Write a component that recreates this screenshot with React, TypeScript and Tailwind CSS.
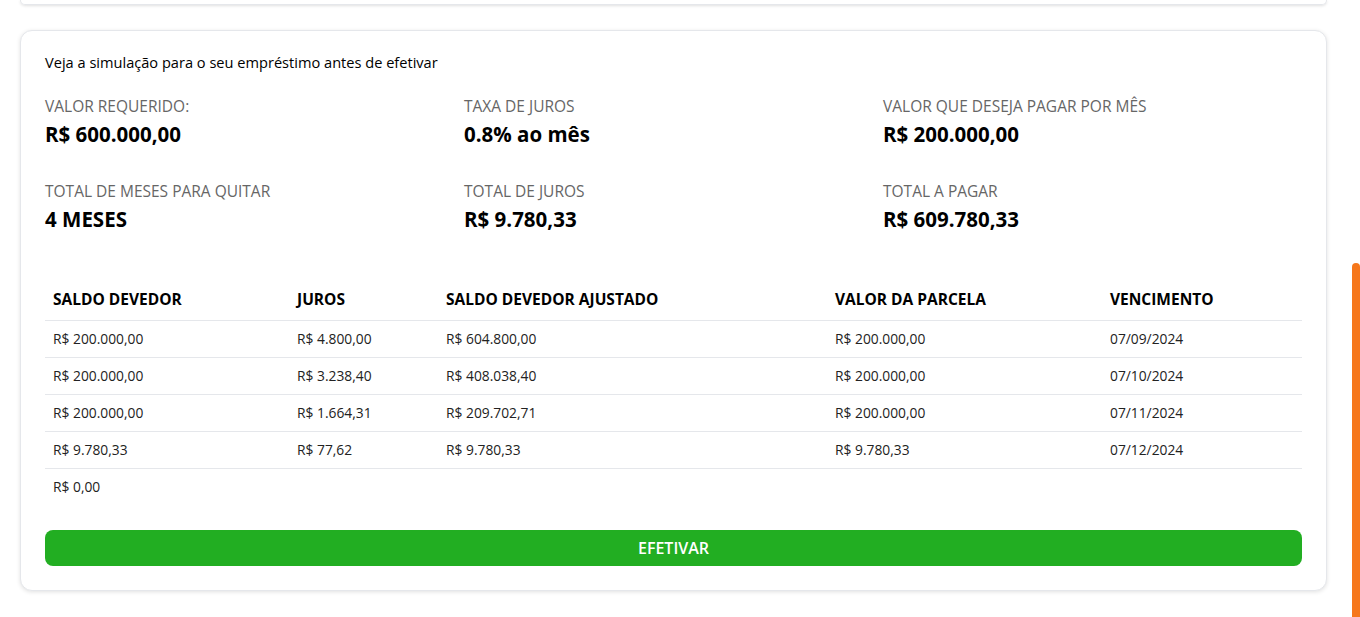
const summary = [
  { label: 'VALOR REQUERIDO:', value: 'R$ 600.000,00' },
  { label: 'TAXA DE JUROS', value: '0.8% ao mês' },
  { label: 'VALOR QUE DESEJA PAGAR POR MÊS', value: 'R$ 200.000,00' },
  { label: 'TOTAL DE MESES PARA QUITAR', value: '4 MESES' },
  { label: 'TOTAL DE JUROS', value: 'R$ 9.780,33' },
  { label: 'TOTAL A PAGAR', value: 'R$ 609.780,33' },
];

const rows = [
  ['R$ 200.000,00', 'R$ 4.800,00', 'R$ 604.800,00', 'R$ 200.000,00', '07/09/2024'],
  ['R$ 200.000,00', 'R$ 3.238,40', 'R$ 408.038,40', 'R$ 200.000,00', '07/10/2024'],
  ['R$ 200.000,00', 'R$ 1.664,31', 'R$ 209.702,71', 'R$ 200.000,00', '07/11/2024'],
  ['R$ 9.780,33', 'R$ 77,62', 'R$ 9.780,33', 'R$ 9.780,33', '07/12/2024'],
  ['R$ 0,00', '', '', '', ''],
];

export default function App() {
  return (
    <div className="relative min-h-[617px] bg-white font-['Open_Sans',sans-serif] text-black overflow-hidden">
      {/* bottom edge of the previous card */}
      <div className="ml-5 mr-[33px] h-[5px] rounded-b-xl border border-t-0 border-gray-200 shadow-[0_1px_3px_rgba(0,0,0,0.12)]" />

      <div className="ml-5 mr-[33px] mt-[25px] rounded-xl border border-gray-200 bg-white px-6 pt-[21px] pb-6 shadow-[0_1px_4px_rgba(0,0,0,0.12)]">
        <p className="text-[14.6px] leading-5 font-medium">Veja a simulação para o seu empréstimo antes de efetivar</p>

        <div className="mt-[24px] grid grid-cols-3 gap-y-[35px]">
          {summary.map((s) => (
            <div key={s.label}>
              <div className="text-[15.5px] leading-5 text-[#666]">{s.label}</div>
              <div className="mt-[6px] text-[20.5px] leading-6 font-bold">{s.value}</div>
            </div>
          ))}
        </div>

        <table className="mt-[57px] w-full border-collapse text-left">
          <thead>
            <tr className="border-b border-gray-200">
              <th className="w-[244px] px-2 pb-[9px] text-[15.5px] font-bold">SALDO DEVEDOR</th>
              <th className="w-[149px] px-2 pb-[9px] text-[15.5px] font-bold">JUROS</th>
              <th className="w-[389px] px-2 pb-[9px] text-[15.5px] font-bold">SALDO DEVEDOR AJUSTADO</th>
              <th className="w-[275px] px-2 pb-[9px] text-[15.5px] font-bold">VALOR DA PARCELA</th>
              <th className="px-2 pb-[9px] text-[15.5px] font-bold">VENCIMENTO</th>
            </tr>
          </thead>
          <tbody>
            {rows.map((r, i) => (
              <tr key={i} className={i < rows.length - 1 ? 'border-b border-gray-200' : ''}>
                {r.map((c, j) => (
                  <td key={j} className="h-[37px] px-2 text-[13.8px] text-[#222]">{c}</td>
                ))}
              </tr>
            ))}
          </tbody>
        </table>

        <button className="mt-[24px] h-9 w-full rounded-lg bg-[#22ae22] text-[16px] font-semibold text-white">
          EFETIVAR
        </button>
      </div>

      <div className="absolute right-0 top-[263px] h-[360px] w-2 rounded-t bg-[#f6771b]" />
    </div>
  );
}
